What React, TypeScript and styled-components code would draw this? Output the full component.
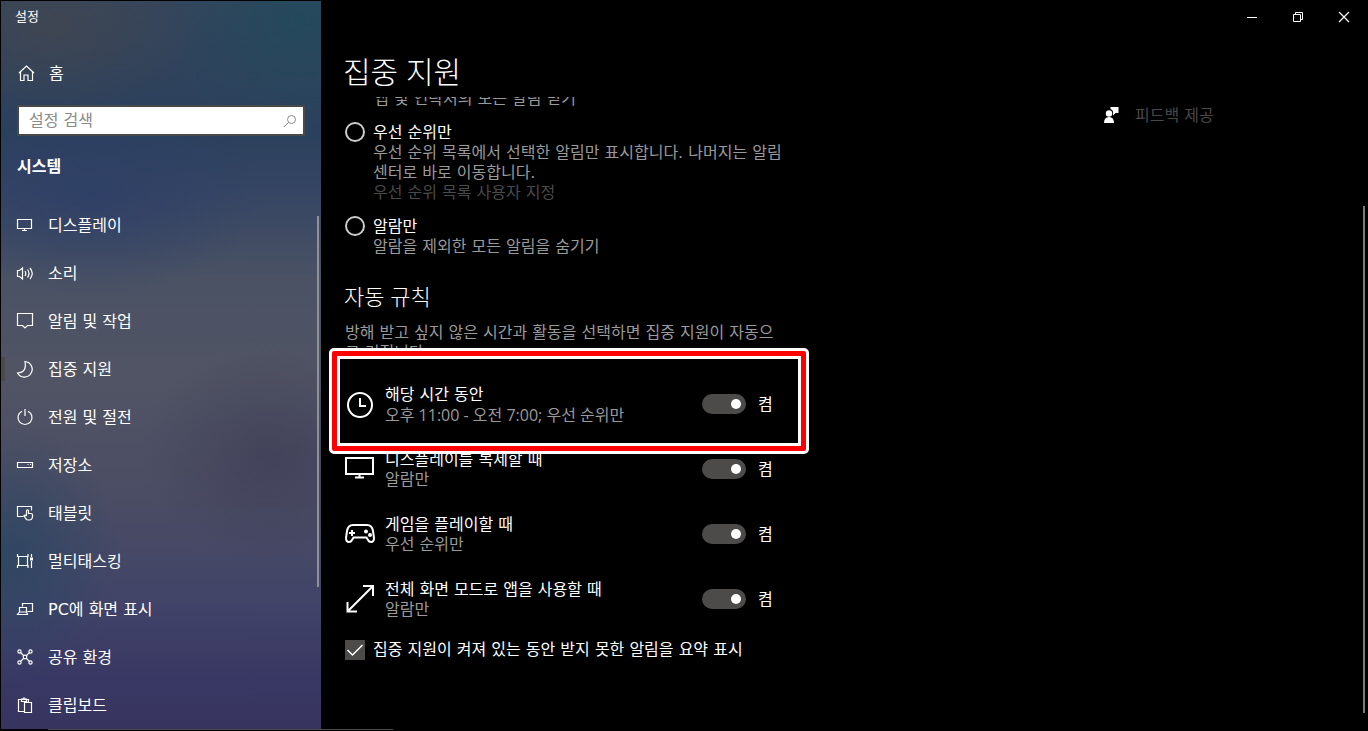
import React from "react";
import styled, { createGlobalStyle } from "styled-components";

const headingFont = `"Open Sans", "Noto Sans CJK KR", sans-serif`;
const textFont = `"DejaVu Sans", "Noto Sans CJK KR", sans-serif`;

const GlobalStyle = createGlobalStyle`
  *, *::before, *::after { box-sizing: border-box; }
  body {
    margin: 0;
    background: #000;
    color: #fff;
    font-family: ${textFont};
    font-size: 16px;
    line-height: 20px;
  }
  h1, h2, h3, p, ul { margin: 0; padding: 0; font-weight: 400; }
  button, input { font: inherit; color: inherit; }
`;

const Window = styled.div`
  display: flex;
  min-height: 100vh;
  padding: 1px 1px 2px;
  background: linear-gradient(#4a4a4a, #4a4a4a) left 48px bottom 1px / 345px 1px no-repeat, #000;
`;

const Sidebar = styled.aside`
  display: flex;
  flex: none;
  flex-direction: column;
  width: 320px;
  background:
    radial-gradient(ellipse 150px 90px at 50px 25px, rgba(66, 70, 80, 0.8), transparent),
    radial-gradient(ellipse 140px 110px at 300px 20px, rgba(33, 74, 92, 0.8), transparent),
    radial-gradient(ellipse 170px 100px at 90px 195px, rgba(45, 62, 104, 0.7), transparent),
    radial-gradient(ellipse 110px 130px at 10px 555px, rgba(42, 70, 98, 0.8), transparent),
    radial-gradient(ellipse 130px 110px at 270px 455px, rgba(62, 62, 86, 0.7), transparent),
    linear-gradient(180deg, #34455c 0%, #2b405c 18%, #354563 26%, #4a5264 38%, #515464 52%, #4b4d64 68%, #424468 82%, #393864 93%, #37355f 100%);
`;

const AppName = styled.div`
  padding: 6px 14px;
  font-size: 13px;
`;

/* Centres Hangul optically beside an icon or a control. */
const LabelText = styled.span`
  padding-top: 2px;
`;

const HomeLink = styled.a`
  display: flex;
  align-items: center;
  gap: 13px;
  height: 48px;
  margin-top: 16px;
  padding-left: 15px;
  color: #fff;
  text-decoration: none;
`;

const SearchBox = styled.label`
  display: flex;
  align-items: center;
  height: 31px;
  margin: 8px 16px 0;
  padding: 0 6px 0 10px;
  border: 2px solid #48494b;
  background: #fff;
  color: #8a8a8a;
`;

const SearchInput = styled.input`
  flex: 1;
  min-width: 0;
  height: 24px;
  padding: 0;
  border: 0;
  outline: 0;
  background: transparent;
  color: #222;
  &::placeholder { color: #8a8a8a; opacity: 1; }
`;

const Category = styled.h2`
  margin: 21px 16px 24px;
  font-size: 16px;
  font-weight: 700;
`;

const NavArea = styled.nav`
  display: flex;
  flex: 1;
  justify-content: space-between;
`;

const NavList = styled.ul`
  flex: 1;
  list-style: none;
`;

const NavLink = styled.a<{ $current?: boolean }>`
  display: flex;
  align-items: center;
  gap: 13px;
  height: 48px;
  color: #fff;
  text-decoration: none;
  &::before {
    content: "";
    width: 4px;
    height: 24px;
    margin-right: -3px;
    background: ${(p) => (p.$current ? "#4b4a49" : "transparent")};
  }
`;

const NavThumb = styled.div`
  width: 2px;
  height: 371px;
  margin: 15px 2px 0 0;
  background: #8e909c;
`;

const Main = styled.main`
  display: flex;
  flex: 1;
  flex-direction: column;
  min-width: 0;
`;

const TitleBar = styled.div`
  display: flex;
  justify-content: flex-end;
`;

const CaptionButton = styled.button`
  display: flex;
  align-items: center;
  justify-content: center;
  width: 46px;
  height: 32px;
  padding: 0;
  border: 0;
  background: transparent;
`;

const PageTitle = styled.h1`
  margin: 19px 22px 5px;
  font-family: ${headingFont};
  font-size: 30px;
  font-weight: 300;
  line-height: 40px;
`;

const Scroller = styled.div`
  display: flex;
  flex: 1;
  justify-content: space-between;
  padding-left: 24px;
  overflow: hidden;
`;

const Content = styled.div`
  flex: 1;
  max-width: 440px;
`;

const Muted = styled.p<{ $numeric?: boolean }>`
  color: #9a9a9a;
  font-family: ${(p) => (p.$numeric ? headingFont : textFont)};
`;

const ScrolledNote = styled(Muted)`
  margin: -8px 0 14px 29px;
`;

const Option = styled.div`
  display: grid;
  grid-template-columns: 20px 1fr;
  column-gap: 8px;
  margin-bottom: 14px;
`;

const Radio = styled.input`
  width: 20px;
  height: 20px;
  margin: -1px 0 0;
  border: 2px solid #ccc;
  border-radius: 50%;
  appearance: none;
`;

const DisabledLink = styled.a`
  display: block;
  color: #4a4a4a;
  text-decoration: none;
`;

const SectionTitle = styled.h2`
  margin: 24px 0 12px -1px;
  font-family: ${headingFont};
  font-size: 22px;
  font-weight: 300;
  line-height: 30px;
`;

const RuleList = styled.ul`
  display: grid;
  gap: 23px;
  margin: 20px 0;
  list-style: none;
`;

const Rule = styled.li<{ $marked?: boolean }>`
  position: relative;
  z-index: ${(p) => (p.$marked ? 1 : 0)};
  display: flex;
  align-items: center;
`;

const Frame = styled.div`
  position: absolute;
  z-index: -1;
  inset: -35px -24px -29px -16px;
  border: 3px solid #fff;
  border-radius: 5px;
  background: #f00;
  &::before {
    content: "";
    position: absolute;
    inset: 5px;
    border: 3px solid #fff;
    background: #000;
  }
`;

const RuleIcon = styled.span`
  display: flex;
  width: 40px;
`;

const RuleText = styled.div`
  flex: 1;
  padding-top: 2px;
`;

const SwitchLabel = styled.label`
  display: flex;
  align-items: center;
  gap: 12px;
  width: 83px;
`;

const Switch = styled.input`
  display: flex;
  align-items: center;
  justify-content: flex-end;
  width: 44px;
  height: 20px;
  margin: 0;
  padding-right: 5px;
  border-radius: 10px;
  background: #4c4b4a;
  appearance: none;
  &::before {
    content: "";
    width: 10px;
    height: 10px;
    border-radius: 50%;
    background: #fff;
  }
`;

const CheckLabel = styled.label`
  display: flex;
  align-items: center;
  gap: 8px;
`;

const CheckBox = styled.span`
  display: grid;
  width: 20px;
  height: 20px;
  background: #4c4b4a;
  & > * { grid-area: 1 / 1; }
`;

const CheckInput = styled.input`
  width: 20px;
  height: 20px;
  margin: 0;
  appearance: none;
`;

const Related = styled.aside`
  display: flex;
  flex: none;
  justify-content: space-between;
  width: 264px;
`;

const FeedbackLink = styled.a`
  display: flex;
  align-items: center;
  gap: 12px;
  height: 20px;
  margin-top: 8px;
  color: #484848;
  text-decoration: none;
`;

const PageThumb = styled.div`
  width: 2px;
  height: 507px;
  margin: 109px 2px 0 0;
  background: #7a7a7a;
`;

type GlyphProps = { size?: number; width?: number; children: React.ReactNode };

const Glyph = ({ size = 20, width = 1.2, children }: GlyphProps) => (
  <svg width={size} height={size} viewBox={`0 0 ${size} ${size}`} fill="none" stroke="currentColor" strokeWidth={width} aria-hidden="true">
    {children}
  </svg>
);

const navItems = [
  { label: "디스플레이", icon: <path d="M2.5 4.5h14v9h-14zM9.5 13.5v2M7 15.5h5" /> },
  {
    label: "소리",
    icon: <path d="M2.5 7.5h2l3-2.5v11l-3-2.5h-2zM10 8q1.500 2.500 0 5M12.500 6.500q3 4 0 8M15 5q4.500 5.500 0 11" />,
  },
  { label: "알림 및 작업", icon: <path d="M2.500 2.500h15v12h-5l-2.500 2.500-2.500-2.500h-5z" /> },
  { label: "집중 지원", current: true, icon: <path d="M10 2.500A7.800 7.800 0 1 1 2.500 14Q12 13.500 10 2.500z" /> },
  { label: "전원 및 절전", icon: <path d="M7 4.200A7 7 0 1 0 13 4.200M10 2v7" /> },
  { label: "저장소", icon: <path d="M2.500 7.500h15v5h-15zM12.500 9.500h1M15 9.500h1" /> },
  {
    label: "태블릿",
    icon: <path d="M8.500 13.500h-6v-10h14v4M11.500 13V7.500q1-1.500 2 0v3h2.500q1.500 0 1.500 1.500v2q-.5 3-3 3h-1.500q-2 0-4-4.500 1-1 2.500.5" />,
  },
  {
    label: "멀티태스킹",
    icon: (
      <>
        <path d="M2.500 3v2.500h10.500V3M3.500 5.500v9M12.500 5.500v9M2.500 17v-2.500h10.500V17M16.500 3v3M16.500 10v7" />
        <path d="M15 6.500h3v3h-3z" fill="currentColor" stroke="none" />
      </>
    ),
  },
  { label: "PC에 화면 표시", icon: <path d="M7.500 7.500v-3h10v8h-5M4.500 8.500h7v4.500h-7zM2.500 15.500h10l-1-2.500h-7z" /> },
  {
    label: "공유 환경",
    icon: (
      <>
        <path d="M5.500 5.500l3 3M14.500 5.500l-3 3M5.500 14.500l3-3M14.500 14.500l-3-3" />
        <circle cx="4.500" cy="4.500" r="1.600" />
        <circle cx="15.500" cy="4.500" r="1.600" />
        <circle cx="4.500" cy="15.500" r="1.600" />
        <circle cx="15.500" cy="15.500" r="1.600" />
        <circle cx="10" cy="10" r="1.800" />
      </>
    ),
  },
  { label: "클립보드", icon: <path d="M9 16.500H3.500v-12H13.500v3M6.500 6.500v-2.500h1.500q1-2.500 2 0h1.500v2.500zM9.500 7.500h7v10h-7z" /> },
];

const rules = [
  {
    title: "해당 시간 동안",
    detail: "오후 11:00 - 오전 7:00; 우선 순위만",
    marked: true,
    icon: (
      <>
        <circle cx="15" cy="16" r="12" />
        <path d="M15 9v8h6" />
      </>
    ),
  },
  {
    title: "디스플레이를 복제할 때",
    detail: "알람만",
    icon: <path d="M1 4h27v16h-27zM14.500 20v4M10 23.500h9" />,
  },
  {
    title: "게임을 플레이할 때",
    detail: "우선 순위만",
    icon: (
      <>
        <path d="M8 6h14q5 0 6 6l1 7q0 4-3 4-2 0-3-2l-1.500-2.500h-13L7 21q-1 2-3 2-3 0-3-4l1-7q1-6 6-6z" />
        <path d="M4 14h6M7 11v6" />
        <g fill="currentColor" stroke="none">
          <circle cx="21" cy="12.500" r="2" />
          <circle cx="25" cy="16" r="2" />
        </g>
      </>
    ),
  },
  {
    title: "전체 화면 모드로 앱을 사용할 때",
    detail: "알람만",
    icon: <path d="M3 27L28 2M18 2h10v10M2.500 18v9.500H12" />,
  },
];

export default function App() {
  return (
    <Window>
      <GlobalStyle />
      <Sidebar>
        <AppName>설정</AppName>
        <HomeLink href="#home">
          <Glyph>
            <path d="M4.500 9v8.500h3.500v-5.500h4v5.500h4.500V9M3 10L10.500 3l7.500 7" />
          </Glyph>
          <LabelText>홈</LabelText>
        </HomeLink>
        <SearchBox>
          <SearchInput type="text" placeholder="설정 검색" aria-label="설정 검색" />
          <Glyph size={14} width={1}>
            <circle cx="8.500" cy="5.500" r="4" />
            <path d="M5.500 8.500L1 13" />
          </Glyph>
        </SearchBox>
        <Category>시스템</Category>
        <NavArea>
          <NavList>
            {navItems.map((item) => (
              <li key={item.label}>
                <NavLink href="#system" $current={item.current}>
                  <Glyph>{item.icon}</Glyph>
                  <LabelText>{item.label}</LabelText>
                </NavLink>
              </li>
            ))}
          </NavList>
          <NavThumb />
        </NavArea>
      </Sidebar>
      <Main>
        <TitleBar>
          <CaptionButton aria-label="최소화">
            <Glyph size={12} width={1}><path d="M1 6.500h10" /></Glyph>
          </CaptionButton>
          <CaptionButton aria-label="이전 크기로 복원">
            <Glyph size={12} width={1}><path d="M1.500 3.500h7v7h-7zM3.500 3.500v-2h7v7h-2" /></Glyph>
          </CaptionButton>
          <CaptionButton aria-label="닫기">
            <Glyph size={12}><path d="M1 1l10 10M11 1L1 11" /></Glyph>
          </CaptionButton>
        </TitleBar>
        <PageTitle>집중 지원</PageTitle>
        <Scroller>
          <Content>
            <ScrolledNote>앱 및 연락처의 모든 알림 받기</ScrolledNote>
            <Option>
              <Radio type="radio" name="focus" id="priority" />
              <div>
                <label htmlFor="priority">우선 순위만</label>
                <Muted>
                  우선 순위 목록에서 선택한 알림만 표시합니다. 나머지는 알림
                  <br />
                  센터로 바로 이동합니다.
                </Muted>
                <DisabledLink href="#priority-list">우선 순위 목록 사용자 지정</DisabledLink>
              </div>
            </Option>
            <Option>
              <Radio type="radio" name="focus" id="alarms" />
              <div>
                <label htmlFor="alarms">알람만</label>
                <Muted>알람을 제외한 모든 알림을 숨기기</Muted>
              </div>
            </Option>
            <SectionTitle>자동 규칙</SectionTitle>
            <Muted>
              방해 받고 싶지 않은 시간과 활동을 선택하면 집중 지원이 자동으
              <br />로 켜집니다.
            </Muted>
            <RuleList>
              {rules.map((rule) => (
                <Rule key={rule.title} $marked={rule.marked}>
                  {rule.marked && <Frame />}
                  <RuleIcon>
                    <Glyph size={30} width={2}>{rule.icon}</Glyph>
                  </RuleIcon>
                  <RuleText>
                    <p>{rule.title}</p>
                    <Muted $numeric={rule.marked}>{rule.detail}</Muted>
                  </RuleText>
                  <SwitchLabel>
                    <Switch type="checkbox" role="switch" defaultChecked />
                    <LabelText>켬</LabelText>
                  </SwitchLabel>
                </Rule>
              ))}
            </RuleList>
            <CheckLabel>
              <CheckBox>
                <CheckInput type="checkbox" defaultChecked />
                <Glyph width={1.5}><path d="M2.500 10l5 5L17.500 5" /></Glyph>
              </CheckBox>
              집중 지원이 켜져 있는 동안 받지 못한 알림을 요약 표시
            </CheckLabel>
          </Content>
          <Related>
            <FeedbackLink href="#feedback">
              <Glyph>
                <g fill="#fff" stroke="none">
                  <circle cx="6" cy="8.500" r="3.200" />
                  <path d="M1 18q0-6 5-6t5 6zM7.500 2h8v6h-3l-2.500 2.500V6.500q-.5-2-2.500-2.500z" />
                </g>
              </Glyph>
              <LabelText>피드백 제공</LabelText>
            </FeedbackLink>
            <PageThumb />
          </Related>
        </Scroller>
      </Main>
    </Window>
  );
}
